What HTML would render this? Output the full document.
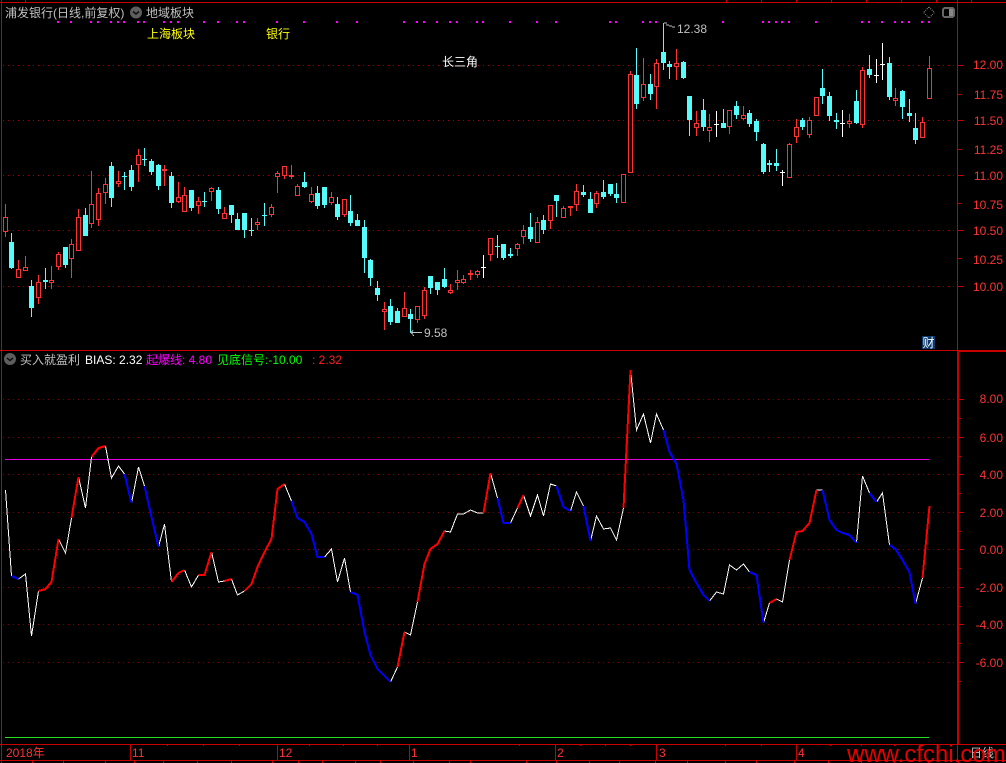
<!DOCTYPE html>
<html><head><meta charset="utf-8"><style>
html,body{margin:0;padding:0;background:#000;width:1006px;height:763px;overflow:hidden}
svg{display:block;position:absolute;left:0;top:0}
text{font-family:"Liberation Sans","WenQuanYi Zen Hei","Noto Sans CJK SC",sans-serif;font-size:12px}
</style></head><body>
<svg width="1006" height="763" viewBox="0 0 1006 763" xmlns="http://www.w3.org/2000/svg">
<rect width="1006" height="763" fill="#000"/>
<g shape-rendering="crispEdges">
<!-- grid -->
<g stroke="#a00000" stroke-width="1" stroke-dasharray="1 4" fill="none">
<path d="M3 65.5H957M3 120.5H957M3 175.5H957M3 230.5H957M3 286.5H957"/>
</g>
<g stroke="#800000" stroke-width="1" stroke-dasharray="1 4" fill="none">
<path d="M3 399.5H957M3 437.5H957M3 474.5H957M3 512.5H957M3 549.5H957M3 587.5H957M3 624.5H957M3 662.5H957"/>
</g>
<!-- frame -->
<g stroke="#c80000" stroke-width="1" fill="none">
<path d="M0 2.5H1006M1.5 0V763M0 350.5H1006M957.5 0V350M0 744.5H1006M0 760.5H1006"/>
<path d="M25.5 0V2M726.5 0V2M761.5 0V2M796.5 0V2M831.5 0V2M866.5 0V2M901.5 0V2M936.5 0V2M971.5 0V2"/>
<path d="M958 65.5h6M958 120.5h6M958 175.5h6M958 230.5h6M958 286.5h6M958 94.5h3M958 149.5h3M958 203.5h3M958 258.5h3"/>
<path d="M958 399.5h6M958 437.5h6M958 474.5h6M958 512.5h6M958 549.5h6M958 587.5h6M958 624.5h6M958 662.5h6M958 418.5h3M958 456.5h3M958 493.5h3M958 531.5h3M958 568.5h3M958 606.5h3M958 643.5h3M958 681.5h3"/>
<path d="M130.5 744V760M277.5 744V760M409.5 744V760M555.5 744V760M656.5 744V760M796.5 744V760M957.5 744V760"/>
<path d="M167.5 744v2M203.5 744v2M239.5 744v2M309.5 744v2M343.5 744v2M377.5 744v2M519.5 744v2M580.5 744v2M605.5 744v2M630.5 744v2M725.5 744v2M761.5 744v2M830.5 744v2M861.5 744v2M894.5 744v2"/>
<path d="M32.5 760v3M63.5 760v3M105.5 760v3M134.5 760v3M163.5 760v3M197.5 760v3M231.5 760v3M272.5 760v3M298.5 760v3M322.5 760v3M355.5 760v3M380.5 760v3M413.5 760v3M449.5 760v3M470.5 760v3M526.5 760v3M556.5 760v3M589.5 760v3M619.5 760v3M655.5 760v3M687.5 760v3M725.5 760v3M756.5 760v3M794.5 760v3M828.5 760v3M861.5 760v3M894.5 760v3M928.5 760v3M958.5 760v3"/>
</g>
<rect x="957" y="351" width="2" height="393" fill="#c80000"/>
<rect x="957" y="350" width="49" height="2" fill="#c80000"/>
<!-- horizontal indicator lines -->
<path d="M5 459.5H929" stroke="#e000e0" fill="none"/>
<path d="M5 737.5H929" stroke="#20e020" fill="none"/>
<!-- magenta dots -->
<path fill="#ff00ff" d="M57 21h2v2h-2zM70 21h2v2h-2zM90 21h2v2h-2zM97 21h2v2h-2zM110 21h2v2h-2zM117 21h2v2h-2zM123 21h2v2h-2zM137 21h2v2h-2zM143 21h2v2h-2zM163 21h2v2h-2zM170 21h2v2h-2zM177 21h2v2h-2zM203 21h2v2h-2zM217 21h2v2h-2zM236 21h2v2h-2zM243 21h2v2h-2zM276 21h2v2h-2zM303 21h2v2h-2zM336 21h2v2h-2zM356 21h2v2h-2zM403 21h2v2h-2zM416 21h2v2h-2zM423 21h2v2h-2zM436 21h2v2h-2zM449 21h2v2h-2zM456 21h2v2h-2zM476 21h2v2h-2zM482 21h2v2h-2zM509 21h2v2h-2zM536 21h2v2h-2zM555 21h2v2h-2zM609 21h2v2h-2zM615 21h2v2h-2zM642 21h2v2h-2zM649 21h2v2h-2zM655 21h2v2h-2zM722 21h2v2h-2zM762 21h2v2h-2zM768 21h2v2h-2zM775 21h2v2h-2zM781 21h2v2h-2zM788 21h2v2h-2zM815 21h2v2h-2zM861 21h2v2h-2zM868 21h2v2h-2zM881 21h2v2h-2zM894 21h2v2h-2zM901 21h2v2h-2zM908 21h2v2h-2zM921 21h2v2h-2zM928 21h2v2h-2z"/>
<!-- red candles -->
<path fill="none" stroke="#ff3232" d="M5.5 204V237M18.5 260V278M25.5 256V271M38.5 275V304M51.5 266V289M58.5 252V270M71.5 239V278M78.5 209V251M91.5 171V228M98.5 188V226M105.5 178V204M118.5 171V187M138.5 149V182M164.5 165V186M178.5 182V203M184.5 187V212M198.5 197V214M211.5 187V201M224.5 207V219M257.5 218V230M271.5 204V217M277.5 171V193M284.5 166V179M291.5 165V179M297.5 184V196M311.5 187V203M331.5 192V205M344.5 199V217M384.5 302V330M404.5 292V317M417.5 306V323M424.5 287V319M450.5 284V294M457.5 270V290M463.5 275V284M470.5 270V280M477.5 270V278M490.5 238V261M517.5 243V256M523.5 225V244M537.5 217V243M550.5 205V229M563.5 206V218M570.5 206V216M576.5 184V211M596.5 191V208M623.5 174V203M630.5 71V173M643.5 58V101M656.5 59V109M676.5 49V80M696.5 111V136M709.5 114V142M729.5 110V134M743.5 106V120M789.5 143V178M796.5 119V143M809.5 117V138M816.5 97V116M849.5 114V128M862.5 67V128M895.5 88V106M922.5 117V138M929.5 56V99"/>
<path fill="#000" stroke="#ff3232" d="M3.5 217.5h4V231.5h-4zM16.5 269.5h4V277.5h-4zM23.5 267.5h4V270.5h-4zM36.5 282.5h4V297.5h-4zM49.5 280.5h4V282.5h-4zM56.5 254.5h4V266.5h-4zM69.5 244.5h4V258.5h-4zM76.5 217.5h4V250.5h-4zM89.5 204.5h4V223.5h-4zM96.5 193.5h4V219.5h-4zM103.5 184.5h4V192.5h-4zM116.5 181.5h4V183.5h-4zM136.5 155.5h4V164.5h-4zM162.5 169.5h4V170.5h-4zM176.5 197.5h4V201.5h-4zM182.5 195.5h4V211.5h-4zM196.5 201.5h4V205.5h-4zM209.5 188.5h4V191.5h-4zM222.5 213.5h4V218.5h-4zM255.5 222.5h4V224.5h-4zM269.5 207.5h4V214.5h-4zM275.5 173.5h4V176.5h-4zM282.5 166.5h4V175.5h-4zM289.5 175.5h4V176.5h-4zM295.5 186.5h4V195.5h-4zM309.5 194.5h4V201.5h-4zM329.5 197.5h4V202.5h-4zM342.5 199.5h4V214.5h-4zM382.5 309.5h4V311.5h-4zM402.5 308.5h4V316.5h-4zM415.5 306.5h4V319.5h-4zM422.5 290.5h4V315.5h-4zM448.5 290.5h4V292.5h-4zM455.5 280.5h4V282.5h-4zM461.5 279.5h4V282.5h-4zM468.5 273.5h4V274.5h-4zM475.5 271.5h4V274.5h-4zM488.5 238.5h4V254.5h-4zM515.5 244.5h4V248.5h-4zM521.5 230.5h4V236.5h-4zM535.5 222.5h4V242.5h-4zM548.5 205.5h4V220.5h-4zM561.5 208.5h4V217.5h-4zM568.5 206.5h4V207.5h-4zM574.5 191.5h4V204.5h-4zM594.5 193.5h4V203.5h-4zM621.5 174.5h4V202.5h-4zM628.5 74.5h4V172.5h-4zM641.5 84.5h4V97.5h-4zM654.5 63.5h4V86.5h-4zM674.5 63.5h4V66.5h-4zM694.5 123.5h4V127.5h-4zM707.5 127.5h4V130.5h-4zM727.5 110.5h4V126.5h-4zM741.5 115.5h4V118.5h-4zM787.5 144.5h4V177.5h-4zM794.5 127.5h4V136.5h-4zM807.5 120.5h4V134.5h-4zM814.5 97.5h4V115.5h-4zM847.5 121.5h4V123.5h-4zM860.5 70.5h4V124.5h-4zM893.5 98.5h4V100.5h-4zM920.5 122.5h4V137.5h-4zM927.5 68.5h4V98.5h-4z"/>
<!-- cyan candles -->
<path fill="none" stroke="#54fcfc" d="M11.5 233V269M31.5 280V317M45.5 268V289M65.5 247V268M85.5 208V236M111.5 162V207M124.5 172V190M131.5 165V191M144.5 148V166M151.5 159V175M158.5 164V190M171.5 172V208M191.5 190V211M204.5 192V207M218.5 187V214M231.5 205V223M237.5 213V230M244.5 213V238M251.5 218V236M264.5 203V226M304.5 172V188M317.5 186V209M324.5 187V208M337.5 197V220M350.5 195V226M357.5 214V226M364.5 220V273M370.5 259V286M377.5 281V301M390.5 299V325M397.5 308V323M410.5 309V333M430.5 276V294M437.5 282V295M444.5 268V288M497.5 235V258M503.5 244V260M510.5 248V258M530.5 213V242M543.5 215V234M556.5 195V217M583.5 185V197M590.5 192V213M603.5 180V199M610.5 184V196M616.5 183V203M636.5 48V109M650.5 74V100M663.5 23V70M669.5 61V79M683.5 61V79M689.5 96V136M703.5 99V131M723.5 109V128M736.5 101V119M749.5 110V127M756.5 119V141M763.5 143V174M769.5 160V172M776.5 149V171M802.5 118V130M822.5 69V104M829.5 92V121M836.5 113V129M856.5 90V124M869.5 55V78M889.5 57V100M902.5 90V119M909.5 99V122M915.5 113V144"/>
<path fill="#54fcfc" d="M9 242h5V268h-5zM29 286h5V308h-5zM43 280h5V282h-5zM63 247h5V265h-5zM83 215h5V236h-5zM109 166h5V198h-5zM122 176h5V177h-5zM129 170h5V187h-5zM142 159h5V160h-5zM149 161h5V172h-5zM156 165h5V186h-5zM169 176h5V203h-5zM189 190h5V208h-5zM202 201h5V202h-5zM216 190h5V209h-5zM229 205h5V215h-5zM235 219h5V230h-5zM242 213h5V230h-5zM249 230h5V231h-5zM262 215h5V216h-5zM302 182h5V187h-5zM315 193h5V206h-5zM322 187h5V205h-5zM335 204h5V217h-5zM348 211h5V223h-5zM355 220h5V226h-5zM362 227h5V258h-5zM368 260h5V278h-5zM375 288h5V295h-5zM388 306h5V322h-5zM395 311h5V323h-5zM408 314h5V319h-5zM428 276h5V288h-5zM435 282h5V290h-5zM442 279h5V287h-5zM495 246h5V247h-5zM501 244h5V258h-5zM508 254h5V256h-5zM528 227h5V239h-5zM541 220h5V230h-5zM554 195h5V201h-5zM581 192h5V195h-5zM588 199h5V213h-5zM601 192h5V197h-5zM608 184h5V194h-5zM614 194h5V198h-5zM634 75h5V104h-5zM648 84h5V94h-5zM661 52h5V63h-5zM667 64h5V67h-5zM681 62h5V78h-5zM687 96h5V120h-5zM701 110h5V127h-5zM721 123h5V128h-5zM734 106h5V115h-5zM747 113h5V124h-5zM754 121h5V132h-5zM761 144h5V172h-5zM767 163h5V165h-5zM774 163h5V166h-5zM800 120h5V127h-5zM820 88h5V96h-5zM827 96h5V116h-5zM834 120h5V122h-5zM854 101h5V123h-5zM867 69h5V75h-5zM887 63h5V97h-5zM900 91h5V107h-5zM907 113h5V116h-5zM913 128h5V140h-5z"/>
<!-- white dojis -->
<path fill="none" stroke="#fff" d="M483.5 255V278M481 267.5h5M716.5 111V137M714 124.5h5M782.5 170V186M780 172.5h5M842.5 110V137M840 123.5h5M876.5 59V83M874 75.5h5M882.5 43V80M880 64.5h5"/>
<!-- BIAS line -->
<g fill="none" transform="translate(.5 0)">
<g stroke="#fff" stroke-width="1">
<polyline points="5,490 11,576"/>
<polyline points="18,579 25,574 31,636 38,591"/>
<polyline points="58,539 65,553 71,518"/>
<polyline points="78,477 85,508 91,457"/>
<polyline points="105,446 111,478 118,466 124,474"/>
<polyline points="131,503 138,467 144,486"/>
<polyline points="158,547 164,524 171,582"/>
<polyline points="184,570 191,587 198,575"/>
<polyline points="211,552 218,582 224,581"/>
<polyline points="231,579 237,595 244,591"/>
<polyline points="284,484 291,501"/>
<polyline points="324,557 331,549 337,582 344,558 350,592"/>
<polyline points="390,682 397,667"/>
<polyline points="404,632 410,635 417,602"/>
<polyline points="444,531 450,532 457,514 463,514 470,510 477,513 483,513"/>
<polyline points="490,473 497,498"/>
<polyline points="510,523 517,508"/>
<polyline points="523,495 530,516 537,495 543,516 550,484 556,486"/>
<polyline points="570,511 576,492 583,506"/>
<polyline points="590,541 596,516 603,529 610,528 616,540 623,508"/>
<polyline points="630,370 636,430 643,414 650,443 656,414 663,430"/>
<polyline points="709,601 716,592 723,594 729,565 736,570 743,564 749,572"/>
<polyline points="763,623 769,603"/>
<polyline points="776,599 782,602 789,560"/>
<polyline points="816,490 822,490"/>
<polyline points="856,543 862,476 869,493"/>
<polyline points="876,502 882,493 889,545"/>
<polyline points="915,604 922,578"/>
</g>
<g stroke="#ff0000" stroke-width="2">
<polyline points="38,591 45,589 51,582 58,539"/>
<polyline points="71,518 78,477"/>
<polyline points="91,457 98,448 105,446"/>
<polyline points="171,582 178,573 184,570"/>
<polyline points="198,575 204,575 211,552"/>
<polyline points="224,581 231,579"/>
<polyline points="244,591 251,584 257,567 264,552 271,539 277,489 284,484"/>
<polyline points="397,667 404,632"/>
<polyline points="417,602 424,564 430,549 437,544 444,531"/>
<polyline points="483,513 490,473"/>
<polyline points="517,508 523,495"/>
<polyline points="623,508 630,370"/>
<polyline points="769,603 776,599"/>
<polyline points="789,560 796,532 802,531 809,523 816,490"/>
<polyline points="922,578 929,506"/>
</g>
<g stroke="#0000ff" stroke-width="2">
<polyline points="11,576 18,579"/>
<polyline points="124,474 131,503"/>
<polyline points="144,486 151,517 158,547"/>
<polyline points="291,501 297,518 304,522 311,534 317,557 324,557"/>
<polyline points="350,592 357,595 364,632 370,655 377,669 384,676 390,682"/>
<polyline points="497,498 503,523 510,523"/>
<polyline points="556,486 563,507 570,511"/>
<polyline points="583,506 590,541"/>
<polyline points="663,430 669,452 676,464 683,500 689,570 696,583 703,595 709,601"/>
<polyline points="749,572 756,575 763,623"/>
<polyline points="822,490 829,520 836,530 842,533 849,535 856,543"/>
<polyline points="869,493 876,502"/>
<polyline points="889,545 895,549 902,560 909,572 915,604"/>
</g>
</g>
<!-- leaders -->
<path fill="none" stroke="#c0c0c0" d="M663.5 23V27M664 23h3M666 25h3M669 26h3M672 27h3"/>
<path fill="none" stroke="#c0c0c0" d="M411 332.5H422M411 332.5l2-2M411 332.5l2 2M413 335l1 1"/>
<!-- top-right icons -->
<path fill="none" stroke="#777" stroke-dasharray="1 1" d="M929 7l5.500 5.500-5.500 5.500-5.500-5.500z"/>
<rect x="943" y="8" width="11" height="9" rx="2" fill="none" stroke="#666" stroke-width="2"/>
<rect x="949" y="9" width="4" height="7" fill="#888"/>
<rect x="922" y="336" width="13" height="13" fill="#0a3a6e"/>
</g>
<!-- circle icons -->
<circle cx="136" cy="12.500" r="6" fill="#5e5e5e"/>
<path d="M133 11.500l3 2.500 3-2.500" fill="none" stroke="#111" stroke-width="1.500"/>
<circle cx="10" cy="359" r="6" fill="#5e5e5e"/>
<path d="M7 358l3 2.500 3-2.500" fill="none" stroke="#111" stroke-width="1.500"/>
<!-- texts -->
<g fill="#c0c0c0">
<text x="5" y="17">浦发银行(日线,前复权)</text>
<text x="146" y="17">地域板块</text>
<text x="20" y="364">买入就盈利</text>
<text x="677" y="33">12.38</text>
<text x="424" y="337">9.58</text>
</g>
<g fill="#ffff00">
<text x="147" y="38">上海板块</text>
<text x="266" y="38">银行</text>
</g>
<text x="442" y="66" fill="#fff">长三角</text>
<text x="922.500" y="347" fill="#fff">财</text>
<text x="85" y="364" fill="#fff">BIAS: 2.32</text>
<text x="146" y="364" fill="#ff00ff">起爆线: 4.80</text>
<text x="217" y="364" fill="#00ff00">见底信号:-10.00</text>
<text x="312" y="364" fill="#ff2020">: 2.32</text>
<g fill="#ff3232" text-anchor="end">
<text x="1003" y="69">12.00</text>
<text x="1003" y="99">11.75</text>
<text x="1003" y="125">11.50</text>
<text x="1003" y="154">11.25</text>
<text x="1003" y="180">11.00</text>
<text x="1003" y="209">10.75</text>
<text x="1003" y="235">10.50</text>
<text x="1003" y="264">10.25</text>
<text x="1003" y="291">10.00</text>
<text x="1003" y="403">8.00</text>
<text x="1003" y="442">6.00</text>
<text x="1003" y="479">4.00</text>
<text x="1003" y="517">2.00</text>
<text x="1003" y="554">0.00</text>
<text x="1003" y="592">-2.00</text>
<text x="1003" y="629">-4.00</text>
<text x="1003" y="667">-6.00</text>
</g>
<g fill="#ff3232">
<text x="6" y="757">2018年</text>
<text x="132" y="757">11</text>
<text x="279" y="757">12</text>
<text x="411" y="757">1</text>
<text x="557" y="757">2</text>
<text x="659" y="757">3</text>
<text x="798" y="757">4</text>
</g>
<text x="970" y="757" fill="#c0c0c0">日线</text>
<text x="847" y="762" fill="#e60000" style="font-size:24px">www.cfchi.com</text>
</svg>
</body></html>
